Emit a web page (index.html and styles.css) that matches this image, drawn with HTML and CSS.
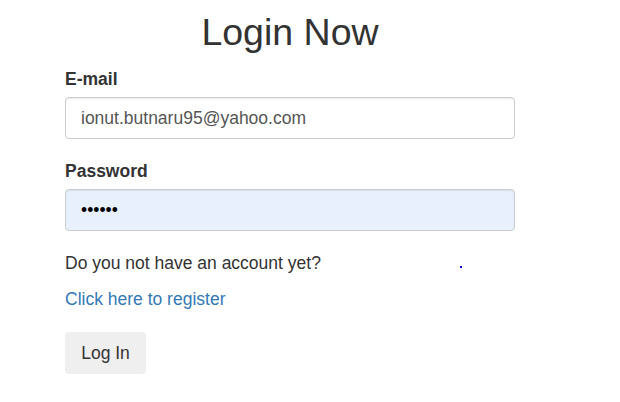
FILE: index.html
```html
<!DOCTYPE html>
<html lang="en">
<head>
<meta charset="utf-8">
<title>Login Now</title>
<link rel="stylesheet" href="styles.css">
</head>
<body>
<div class="login">
  <h1 class="login-title">Login Now</h1>
  <form class="login-form">
    <div class="field">
      <label class="field-label" for="email">E-mail</label>
      <input class="field-input" id="email" type="text" value="ionut.butnaru95@yahoo.com">
    </div>
    <div class="field">
      <label class="field-label" for="password">Password</label>
      <input class="field-input field-input--filled" id="password" type="password" value="secret">
    </div>
    <div class="register">
      <p class="register-text">Do you not have an account yet?<span class="stray-dot"></span></p>
      <a class="register-link" href="#">Click here to register</a>
    </div>
    <button class="btn" type="button">Log In</button>
  </form>
</div>
</body>
</html>
```
FILE: styles.css
```css
* { box-sizing: border-box; }
html, body { margin: 0; padding: 0; background: #fff; }
body {
  font-family: "Liberation Sans", Arial, sans-serif;
  font-size: 17.5px;
  line-height: 20px;
  color: #333;
}
.login {
  width: 450px;
  margin-left: 65px;
  display: flex;
  flex-direction: column;
}
.login-title {
  margin: 8px 0 0;
  font-size: 37.5px;
  font-weight: 400;
  line-height: 48px;
  text-align: center;
  color: #333;
}
.login-form {
  display: flex;
  flex-direction: column;
  margin-top: 13px;
}
.field {
  display: flex;
  flex-direction: column;
  margin-bottom: 22px;
}
.field-label {
  font-weight: bold;
  margin-bottom: 8px;
}
.field-input {
  width: 450px;
  height: 42px;
  border: 1px solid #ccc;
  border-radius: 4px;
  padding: 0 15px;
  font-family: inherit;
  font-size: 17.5px;
  color: #555;
  background: #fff;
  box-shadow: inset 0 1px 1px rgba(0,0,0,.075);
}
.field-input--filled {
  background: #e8f0fe;
  color: #000;
}
.register {
  display: flex;
  flex-direction: column;
  margin-top: 0;
}
.register-text {
  margin: 0;
  position: relative;
}
.stray-dot {
  position: absolute;
  left: 395px;
  top: 13px;
  width: 2px;
  height: 2px;
  background: #0000e0;
}
.register-link {
  margin-top: 16px;
  color: #337ab7;
  text-decoration: none;
}
.btn {
  align-self: flex-start;
  margin-top: 23px;
  width: 81px;
  height: 42px;
  border: none;
  border-radius: 4px;
  background: #efefef;
  font-family: inherit;
  font-size: 17.5px;
  color: #333;
}
```
